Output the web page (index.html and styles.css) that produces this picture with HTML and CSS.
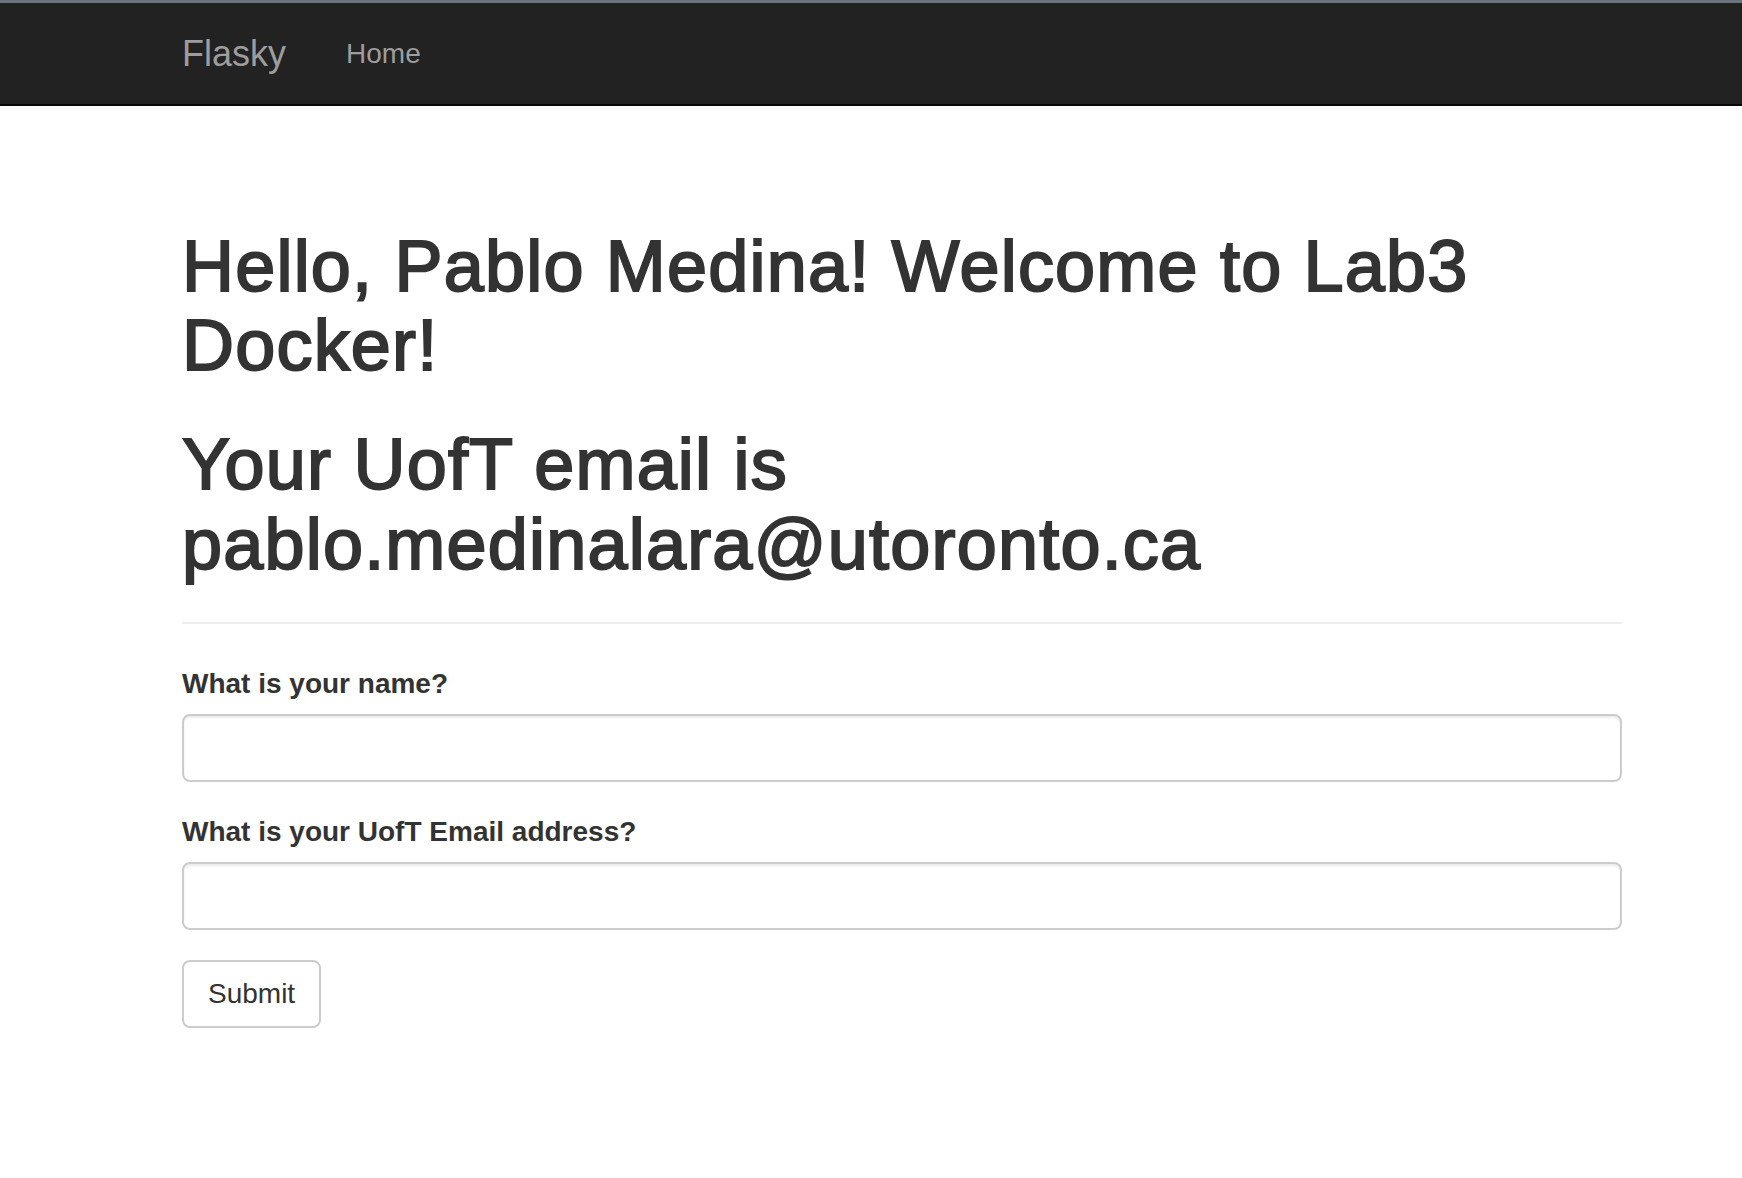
FILE: index.html
```html
<!DOCTYPE html>
<html lang="en">
<head>
<meta charset="utf-8">
<title>Flasky</title>
<link rel="stylesheet" href="styles.css">
</head>
<body>
<div class="topstrip"></div>
<nav class="navbar">
  <div class="container navbar-inner">
    <a class="brand" href="#">Flasky</a>
    <ul class="nav">
      <li><a href="#">Home</a></li>
    </ul>
  </div>
</nav>
<main class="container">
  <div class="page-header">
    <h1>Hello, Pablo Medina! Welcome to Lab3 Docker!</h1>
    <h1>Your UofT email is pablo.medinalara@utoronto.ca</h1>
  </div>
  <form class="form">
    <div class="form-group">
      <label class="control-label" for="name">What is your name?</label>
      <input class="form-control" id="name" type="text">
    </div>
    <div class="form-group">
      <label class="control-label" for="email">What is your UofT Email address?</label>
      <input class="form-control" id="email" type="text">
    </div>
    <button class="btn" type="submit">Submit</button>
  </form>
</main>
</body>
</html>
```
FILE: styles.css
```css
* { box-sizing: border-box; }
html, body { margin: 0; padding: 0; }
body {
  font-family: "Liberation Sans", Arial, sans-serif;
  font-size: 28px;
  line-height: 1.42857;
  color: #333;
  background: #fff;
}
.topstrip {
  height: 3px;
  background: #6a747e;
}
.container {
  width: 1440px;
  margin-left: 182px;
}
.navbar {
  background: #222;
  border-bottom: 2px solid #080808;
  height: 103px;
}
.navbar-inner {
  display: flex;
  align-items: flex-start;
  padding-top: 1px;
}
.brand {
  display: block;
  font-size: 36px;
  line-height: 40px;
  padding: 30px 30px 30px 0;
  color: #9d9d9d;
  text-decoration: none;
}
.nav {
  list-style: none;
  margin: 0;
  padding: 0;
  display: flex;
}
.nav a {
  display: block;
  padding: 30px;
  line-height: 40px;
  color: #9d9d9d;
  text-decoration: none;
}
.page-header {
  margin: 121px 0 40px;
  padding-bottom: 18px;
  border-bottom: 2px solid #eee;
}
h1 {
  font-size: 72px;
  line-height: 1.1;
  font-weight: 400;
  letter-spacing: 1.2px;
  -webkit-text-stroke: 2px #333;
  margin: 0 0 20px;
}
h1 + h1 { margin-top: 40px; }
.form-group {
  margin-bottom: 30px;
}
.control-label {
  display: block;
  font-weight: 700;
  margin-bottom: 10px;
}
.form-control {
  display: block;
  width: 100%;
  height: 68px;
  padding: 12px 24px;
  font: inherit;
  color: #555;
  background: #fff;
  border: 2px solid #ccc;
  border-radius: 8px;
  box-shadow: inset 0 2px 2px rgba(0, 0, 0, 0.075);
}
.btn {
  display: inline-block;
  height: 68px;
  padding: 12px 24px;
  font: inherit;
  line-height: 1.42857;
  color: #333;
  background: #fff;
  border: 2px solid #ccc;
  border-radius: 8px;
}
```
